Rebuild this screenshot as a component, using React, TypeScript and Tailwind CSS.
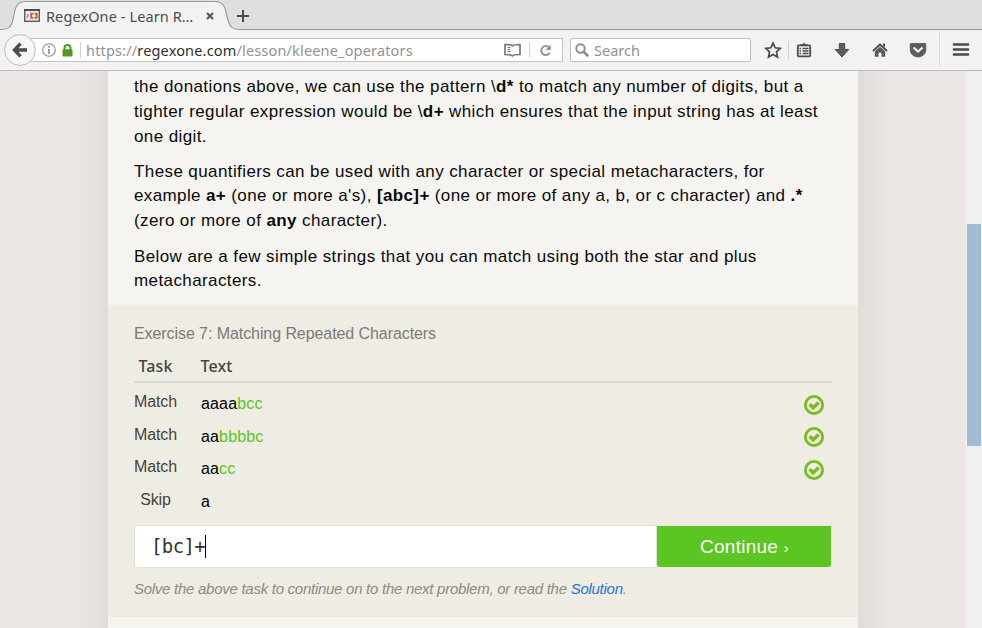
import type { ReactNode } from "react";

function Line({ children, className = "" }: { children: ReactNode; className?: string }) {
  return <div className={`h-[24.5px] whitespace-nowrap leading-[24.5px] ${className}`}>{children}</div>;
}

function TabStrip() {
  return (
    <div className="relative h-[30px] w-full shrink-0 bg-[#dfdfdf]">
      <svg className="absolute inset-0" width="982" height="30" viewBox="0 0 982 30">
        <path d="M0 29.5 C9 29.5 11 27 13 20 C15 10 15 2 25 1.5 H215 C226 2 225 10 228 20 C230 27 232 29.5 241 29.5 V30 H0Z" fill="#f2f2f2" />
        <path d="M0 29.5 C9 29.5 11 27 13 20 C15 10 15 2 25 1.5 H215 C226 2 225 10 228 20 C230 27 232 29.5 241 29.5 H982" fill="none" stroke="#93989c" strokeWidth="1.1" />
      </svg>
      <div className="relative flex h-[30px] items-center pl-6 pt-px">
        <svg width="16" height="13" viewBox="0 0 16 13" className="shrink-0">
          <rect x=".75" y=".75" width="14.5" height="11.500" fill="#f0e8e4" stroke="#46505c" strokeWidth="1.300" />
          <path d="M0 1h16" stroke="#46505c" strokeWidth="2" />
          <path d="M2.800 5l1.500 1.800-1.500 1.800" fill="none" stroke="#555" />
          <path d="M9.200 4.700H7.200v4.200h2M10.600 4.700h2v4.200h-2" fill="none" stroke="#cf4f2b" strokeWidth="1.700" />
        </svg>
        <span className="ml-[6px] w-[152px] whitespace-nowrap text-[14.5px] leading-5 tracking-[0.1px] text-[#4c4c4c]">RegexOne - Learn R…</span>
        <svg width="8" height="8" viewBox="0 0 8 8" className="ml-[8px]">
          <path d="M1 1l6 6M7 1L1 7" stroke="#5c5c5c" strokeWidth="2.2" />
        </svg>
        <svg width="12" height="12" viewBox="0 0 12 12" className="ml-[23px]">
          <path d="M6 0v12M0 6h12" stroke="#4a4a4a" strokeWidth="2" />
        </svg>
      </div>
    </div>
  );
}

function Toolbar() {
  return (
    <div className="relative flex h-[41px] w-full shrink-0 border-b border-[#bcbcbc] bg-[#f2f2f2] pt-2">
      <div className="ml-[18px] flex h-6 w-[545px] items-center border border-[#c2c2c2] bg-white pl-[22px]">
        <svg width="16" height="16" viewBox="0 0 16 16" className="shrink-0">
          <circle cx="8" cy="8" r="6.3" fill="none" stroke="#8d8d8d" strokeWidth="1.1" />
          <path d="M8 7v5M8 4v1.7" stroke="#8d8d8d" strokeWidth="1.7" />
        </svg>
        <svg width="11" height="13" viewBox="0 0 11 13" className="ml-[5px] shrink-0">
          <path d="M2.5 6V4a3 3 0 016 0v2" fill="none" stroke="#4e9a22" strokeWidth="2" />
          <rect x=".5" y="5.2" width="10" height="7.3" rx=".8" fill="#4e9a22" />
        </svg>
        <span className="ml-[7px] h-4 w-px shrink-0 bg-[#d0d0d0]" />
        <span className="ml-[5px] w-[418px] whitespace-nowrap text-[14.5px] leading-5 tracking-[0.165px] text-[#929292]">
          https://<span className="text-[#2e2e2e]">regexone.com</span>/lesson/kleene_operators
        </span>
        <svg width="17" height="14" viewBox="0 0 17 14" className="shrink-0">
          <path d="M8.5 2.8C7 1.4 5 1.5 1 1.5v10c4 0 6 0 7.5 1.3 1.5-1.3 3.500-1.300 7.500-1.300v-10c-4 0-6-.1-7.500 1.300z" fill="none" stroke="#777" strokeWidth="1.7" />
          <path d="M3.500 4.500h3M3.500 6.500h2.500M3.500 8.500h3" stroke="#777" />
        </svg>
        <span className="ml-2 h-4 w-px shrink-0 bg-[#d0d0d0]" />
        <svg width="13" height="13" viewBox="0 0 13 13" className="ml-[9px] shrink-0">
          <path d="M10.300 3.700A4.500 4.500 0 1 0 10.700 8.700" fill="none" stroke="#8799a9" strokeWidth="2" />
          <path d="M11.800 .8v5.200H6.600z" fill="#8799a9" />
        </svg>
      </div>
      <div className="ml-[7px] flex h-6 w-[181px] items-center rounded-[2px] border border-[#bfbfbf] bg-white pl-1">
        <svg width="15" height="15" viewBox="0 0 15 15">
          <circle cx="5.500" cy="5.500" r="4.200" fill="none" stroke="#8c8c8c" strokeWidth="1.900" />
          <path d="M8.500 8.500l4.800 4.800" stroke="#8c8c8c" strokeWidth="2.600" />
        </svg>
        <span className="ml-1 text-[14.5px] leading-5 text-[#929292]">Search</span>
      </div>
      <svg className="absolute left-0 top-0" width="982" height="40" viewBox="0 30 982 40">
        <circle cx="20" cy="50" r="15.400" fill="#f7f7f7" stroke="#bdbdbd" />
        <path d="M27 50H15M20.500 43.700L14.500 50l6 6.300" fill="none" stroke="#4b4b4b" strokeWidth="3.400" />
        <path d="M773 43.100l2.150 4.700 5.150.6-3.800 3.500 1 5.100-4.500-2.500-4.500 2.500 1-5.100-3.800-3.500 5.150-.6z" fill="none" stroke="#4b4b4b" strokeWidth="1.700" />
        <path d="M788.500 41v18" stroke="#d0d0d0" />
        <rect x="797.800" y="45.300" width="12.400" height="11" rx="1" fill="#f2f2f2" stroke="#4b4b4b" strokeWidth="1.800" />
        <path d="M800.500 46v-1.800h2l1.500-1.400 1.500 1.400h2V46z" fill="#4b4b4b" />
        <path d="M799.500 48.500h1.500M799.500 51h1.500M799.500 53.500h1.500M802.500 48.500h6M802.500 51h6M802.500 53.500h6" stroke="#4b4b4b" strokeWidth="1.400" />
        <path d="M839.300 43.500h5.400v6h4L842 57l-6.700-7.500h4z" fill="#5c5c5c" stroke="#4b4b4b" strokeWidth="1" />
        <path d="M873 51l7-6.500 7 6.500" fill="none" stroke="#4b4b4b" strokeWidth="1.800" />
        <path d="M874.800 51.500l5.200-4.700 5.200 4.700v5.300h-3.700v-4h-3v4h-3.700z" fill="#5c5c5c" />
        <path d="M883 43.500h2v4l-2-1.800z" fill="#4b4b4b" />
        <path d="M911 43.500h14q.8 0 .8.800v5.200c0 4.800-4 7.500-7.800 7.500s-7.800-2.700-7.800-7.500v-5.200q0-.8.800-.8z" fill="#5c5c5c" stroke="#4b4b4b" strokeWidth=".7" />
        <path d="M913.500 47.500l4.500 4 4.500-4" fill="none" stroke="#f2f2f2" strokeWidth="2.200" />
        <path d="M939.500 33v34" stroke="#dadada" />
        <path d="M954 44.500h14M954 49.500h14M954 54.500h14" stroke="#4b4b4b" strokeWidth="2.700" strokeLinecap="round" />
      </svg>
    </div>
  );
}

function Check() {
  return (
    <svg width="20" height="20" viewBox="0 0 20 20">
      <circle cx="10" cy="10" r="8.600" fill="none" stroke="#79bc20" strokeWidth="2.800" />
      <path d="M5.700 9.300l3.500 3.400 5.500-5.300" fill="none" stroke="#79bc20" strokeWidth="3.500" />
    </svg>
  );
}

const rows = [
  { task: "Match", plain: "aaaa", hit: "bcc", ok: true },
  { task: "Match", plain: "aa", hit: "bbbbc", ok: true },
  { task: "Match", plain: "aa", hit: "cc", ok: true },
  { task: "Skip", plain: "a", hit: "", ok: false },
];

function Exercise() {
  return (
    <section className="h-[312px] rounded-[3px] bg-[#efece3] px-[26px] pt-[19px]">
      <h2 className="h-5 whitespace-nowrap text-[16px] leading-5 tracking-[-0.075px] text-[#7b7b7b]">Exercise 7: Matching Repeated Characters</h2>
      <div className="mt-[8px] flex h-[31px] w-[698px] border-b-2 border-[#dadbd9] font-['Noto_Sans',sans-serif] text-[16px] font-medium leading-[28px] tracking-[0.1px] text-[#444]">
        <span className="w-[66.5px] pl-[4.5px]">Task</span>
        <span>Text</span>
      </div>
      <div className="h-[137px] pt-[6px]">
        {rows.map((r, i) => (
          <div key={i} className="flex h-[32.5px] w-[698px] items-start">
            <div className="w-[43px] pt-[3px] text-center text-[16px] leading-5 tracking-[-0.1px] text-[#444]">{r.task}</div>
            <div className="ml-6 grow pt-[5px] text-[16px] leading-5 tracking-[0.15px] text-black">
              {r.plain}
              <span className="text-[#5bc522]">{r.hit}</span>
            </div>
            {r.ok && (
              <div className="pr-2 pt-[5.900px]">
                <Check />
              </div>
            )}
          </div>
        ))}
      </div>
      <div className="mt-[5px] flex h-[43px] w-[697px]">
        <div className="flex h-[43px] w-[523px] items-center rounded-l-[3px] border border-[#e3e0d8] bg-white pl-4 font-['DejaVu_Sans_Mono',monospace] text-[19px] tracking-[-0.600px] text-[#333]">
          [bc]+
          <span className="h-[23px] w-px bg-black" />
        </div>
        <div className="mt-px flex h-[41px] w-[174px] items-center justify-center rounded-b-[3px] bg-[#5bc522] pl-px pt-px text-[19px] tracking-[0.25px] text-white">
          <span>Continue <span className="text-[15px]">›</span></span>
        </div>
      </div>
      <p className="mt-[11px] h-5 whitespace-nowrap text-[15px] italic leading-5 tracking-[-0.27px] text-[#8b8b88]">
        Solve the above task to continue on to the next problem, or read the <span className="text-[#1f74d8]">Solution</span>.
      </p>
    </section>
  );
}

export default function App() {
  return (
    <div className="flex h-[628px] w-[982px] flex-col overflow-hidden bg-[#ece7e4] font-['Liberation_Sans',Arial,sans-serif]">
      <header className="font-['Noto_Sans',sans-serif]">
        <TabStrip />
        <Toolbar />
      </header>
      <div className="flex h-[557px]">
        <div className="w-[108px] bg-linear-to-r from-[#ece7e4] from-70% to-[#e1dcd9]" />
        <main className="w-[750px] bg-[#f6f4f1]">
          <article className="h-[234px] px-[26px] pt-[4px] text-[17px] tracking-[0.4px] text-[#0a0a0a]">
            <Line>the donations above, we can use the pattern \<b>d*</b> to match any number of digits, but a</Line>
            <Line>tighter regular expression would be \<b>d+</b> which ensures that the input string has at least</Line>
            <Line className="pt-[0.5px]">one digit.</Line>
            <Line className="mt-[11px]">These quantifiers can be used with any character or special metacharacters, for</Line>
            <Line className="tracking-[0.38px]">example <b>a+</b> (one or more a's), <b>[abc]+</b> (one or more of any a, b, or c character) and <b>.*</b></Line>
            <Line>(zero or more of <b>any</b> character).</Line>
            <Line className="mt-[11px] pt-[0.5px]">Below are a few simple strings that you can match using both the star and plus</Line>
            <Line>metacharacters.</Line>
          </article>
          <Exercise />
        </main>
        <div className="w-[108px] bg-linear-to-r from-[#e1dcd9] to-[#ece7e4] to-30%" />
        <div className="w-4 bg-[#f0f0f0] pl-px pt-[153px]">
          <div className="h-[222px] w-[14px] bg-[#a1bcd6]" />
        </div>
      </div>
    </div>
  );
}
